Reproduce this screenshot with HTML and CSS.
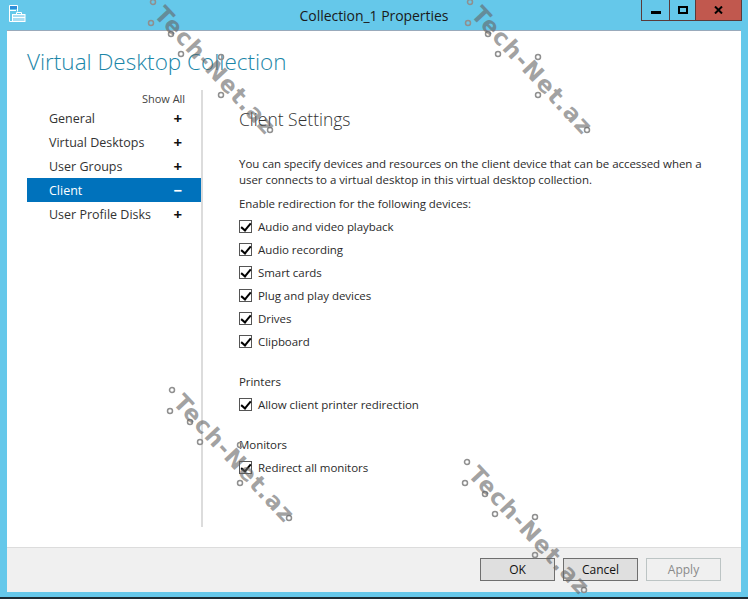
FILE: index.html
```html
<!DOCTYPE html>
<html>
    <head>
        <meta name='viewport' content='width=device-width, initial-scale=1.0'>
        <title>Collection_1 Properties</title>
        <link rel="stylesheet" href="styles.css">
    </head>
    <body>
        <div class='window'>
            <div class='titlebar'>
                <svg class='appicon' width='17' height='18' viewBox='0 0 17 18'>
                    <path d='M0.5 17.5v-16h8v6M0.5 17.5h3' fill='none' stroke='#fff'/>
                    <rect x='1' y='2' width='7' height='3' fill='#2f8fd8'/>
                    <path d='M1 6.5h6' stroke='#fff'/>
                    <rect x='3.5' y='10.5' width='12.5' height='7' fill='#a9ddf2' stroke='#fff'/>
                    <path d='M7.5 10.5v-2h5v2M4 13.5h12' fill='none' stroke='#fff'/>
                </svg>
                <div class='title'>Collection_1 Properties</div>
                <div class='winbtns'>
                    <div class='winbtn minbtn'><span class='minglyph'></span></div>
                    <div class='winbtn maxbtn'><span class='maxglyph'></span></div>
                    <div class='winbtn closebtn'>
                        <svg width='9' height='8' viewBox='0 0 9 8'><path d='M1 0.5l7 7M8 0.5l-7 7' stroke='#000' stroke-width='2' fill='none'/></svg>
                    </div>
                </div>
            </div>
            <div class='client'>
                <div class='main'>
                    <h1>Virtual Desktop Collection</h1>
                    <div class='columns'>
                        <div class='sidebar'>
                            <div class='showall'>Show All</div>
                            <div class='navitem'><span>General</span><span class='sign'>+</span></div>
                            <div class='navitem'><span>Virtual Desktops</span><span class='sign'>+</span></div>
                            <div class='navitem'><span>User Groups</span><span class='sign'>+</span></div>
                            <div class='navitem active'><span>Client</span><span class='sign'>&minus;</span></div>
                            <div class='navitem'><span>User Profile Disks</span><span class='sign'>+</span></div>
                        </div>
                        <div class='content'>
                            <h2>Client Settings</h2>
                            <p class='intro'>You can specify devices and resources on the client device that can be accessed when a user connects to a virtual desktop in this virtual desktop collection.</p>
                            <p class='enable'>Enable redirection for the following devices:</p>
                            <div class='checks'>
                                <label class='check'><span class='box'></span>Audio and video playback</label>
                                <label class='check'><span class='box'></span>Audio recording</label>
                                <label class='check'><span class='box'></span>Smart cards</label>
                                <label class='check'><span class='box'></span>Plug and play devices</label>
                                <label class='check'><span class='box'></span>Drives</label>
                                <label class='check'><span class='box'></span>Clipboard</label>
                            </div>
                            <div class='group'>Printers</div>
                            <label class='check'><span class='box'></span>Allow client printer redirection</label>
                            <div class='group'>Monitors</div>
                            <label class='check'><span class='box'></span>Redirect all monitors</label>
                        </div>
                    </div>
                </div>
                <div class='footer'>
                    <button>OK</button>
                    <button>Cancel</button>
                    <button class='disabled'>Apply</button>
                </div>
            </div>
        </div>
        <svg class='defs' width='0' height='0'>
            <symbol id='rings' overflow='visible' viewBox='0 0 130 135' width='130' height='135'>
                <g fill='none' stroke='#8f8f8f' stroke-width='1.5'>
                    <circle cx='3' cy='3' r='2.5'/>
                    <circle cx='1' cy='24' r='2.5'/>
                    <circle cx='21' cy='35' r='2.5'/>
                    <circle cx='31' cy='55' r='2.5'/>
                    <circle cx='71' cy='58' r='2.5'/>
                    <circle cx='71' cy='96' r='2.5'/>
                    <circle cx='120' cy='131' r='2.5'/>
                </g>
            </symbol>
        </svg>
        <div class='mark mark1'><svg class='rings' width='130' height='135'><use href='#rings'/></svg><span>Tech-Net.az</span></div>
        <div class='mark mark2'><svg class='rings' width='130' height='135'><use href='#rings'/></svg><span>Tech-Net.az</span></div>
        <div class='mark mark3'><svg class='rings' width='130' height='135'><use href='#rings'/></svg><span>Tech-Net.az</span></div>
        <div class='mark mark4'><svg class='rings' width='130' height='135'><use href='#rings'/></svg><span>Tech-Net.az</span></div>
    </body>
</html>
```

FILE: styles.css
```css
html, body {
    margin: 0;
    padding: 0;
    overflow: hidden;
}
body {
    width: 748px;
    height: 599px;
    font-family: "Open Sans", sans-serif;
    font-size: 11.5px;
    letter-spacing: -0.05px;
    color: #2b2b2b;
    position: relative;
}
.window {
    width: 748px;
    height: 597px;
    background: #65c8ea;
    border-bottom: 2px solid #1c2b33;
    display: flex;
    flex-direction: column;
}
.titlebar {
    height: 30px;
    display: flex;
    position: relative;
    flex: none;
}
.appicon {
    margin: 4px 0 0 9px;
}
.title {
    position: absolute;
    left: 0;
    right: 0;
    top: 6px;
    text-align: center;
    font-size: 14px;
    color: #1a1a1a;
}
.winbtns {
    margin-left: auto;
    margin-right: 6px;
    display: flex;
    height: 21px;
    border: 1px solid #5a3a3a;
    border-top: 0;
    box-sizing: border-box;
    position: relative;
}
.winbtn {
    display: flex;
    align-items: center;
    justify-content: center;
    box-sizing: border-box;
}
.minbtn {
    width: 28px;
    border-right: 1px solid #5a3a3a;
}
.maxbtn {
    width: 26px;
    border-right: 1px solid #5a3a3a;
}
.closebtn {
    width: 45px;
    background: #c1584e;
}
.minglyph {
    width: 10px;
    height: 3px;
    background: #000;
    margin-top: 5px;
}
.maxglyph {
    width: 10px;
    height: 8px;
    box-sizing: border-box;
    border: 2px solid #000;
}
.client {
    flex: 1;
    margin: 0 7px 5px 7px;
    background: #fff;
    display: flex;
    flex-direction: column;
    border-top: 1px solid #9ab;
}
.main {
    flex: 1;
    padding: 0 0 0 20px;
}
h1 {
    margin: 0;
    padding-top: 14px;
    font-size: 22.5px;
    line-height: 34px;
    font-weight: 300;
    letter-spacing: 0;
    color: #1b86a8;
}
.columns {
    display: flex;
    margin-top: 11px;
}
.sidebar {
    width: 174px;
    flex: none;
    border-right: 2px solid #dcdcdc;
    height: 437px;
}
.showall {
    font-size: 11px;
    line-height: 15px;
    padding-top: 1px;
    text-align: right;
    padding-right: 16px;
    color: #444;
}
.navitem {
    height: 24px;
    line-height: 26px;
    display: flex;
    justify-content: space-between;
    padding: 0 19px 0 22px;
    color: #333;
    font-size: 12.5px;
    letter-spacing: 0;
}
.navitem.active {
    background: #0072bc;
    color: #fff;
}
.sign {
    font-weight: 700;
    font-size: 15px;
    line-height: 24px;
    color: #111;
}
.active .sign {
    color: #fff;
}
.content {
    padding-left: 36px;
    width: 470px;
}
h2 {
    margin: 0;
    padding-top: 17px;
    font-size: 17.5px;
    line-height: 24px;
    font-weight: 300;
    letter-spacing: 0;
    color: #333;
}
p {
    margin: 0;
}
.intro {
    margin-top: 25px;
    line-height: 16px;
}
.enable {
    margin-top: 8px;
    line-height: 16px;
}
.checks {
    margin-top: 3px;
}
.check {
    display: flex;
    align-items: center;
    height: 23px;
}
.box {
    width: 11px;
    height: 11px;
    border: 1px solid #555;
    margin-right: 6px;
    position: relative;
}
.box::after {
    content: "";
    position: absolute;
    left: 3px;
    top: 0;
    width: 4px;
    height: 8px;
    border: solid #000;
    border-width: 0 2px 2px 0;
    transform: rotate(40deg);
}
.group {
    margin-top: 21px;
    margin-bottom: 3px;
    line-height: 16px;
}
.footer {
    height: 45px;
    flex: none;
    background: #f0f0f0;
    border-top: 1px solid #dcdcdc;
    box-sizing: border-box;
    display: flex;
    justify-content: flex-end;
    gap: 8px;
    padding: 10px 20px 0 0;
}
button {
    width: 75px;
    height: 23px;
    font-family: inherit;
    font-size: 12px;
    letter-spacing: 0;
    background: #dfdfdf;
    border: 1px solid #6f6f6f;
    padding: 0;
    color: #111;
}
button.disabled {
    background: #f0f0f0;
    border-color: #bcc4c4;
    color: #8a8a8a;
}
.defs {
    position: absolute;
}
.mark {
    position: absolute;
    width: 130px;
    height: 135px;
}
.mark span {
    position: absolute;
    left: 14px;
    top: 6px;
    font-family: "DejaVu Sans", sans-serif;
    font-weight: 700;
    font-size: 23px;
    line-height: 14px;
    letter-spacing: 1.3px;
    color: rgba(100, 100, 100, 0.6);
    white-space: nowrap;
    transform: rotate(47deg);
    transform-origin: 0 0;
}
.rings {
    position: absolute;
    left: 0;
    top: 0;
    overflow: visible;
}
.mark1 { left: 150px; top: -1px; }
.mark2 { left: 467px; top: -1px; }
.mark3 { left: 169px; top: 387px; }
.mark4 { left: 464px; top: 459px; }
```
